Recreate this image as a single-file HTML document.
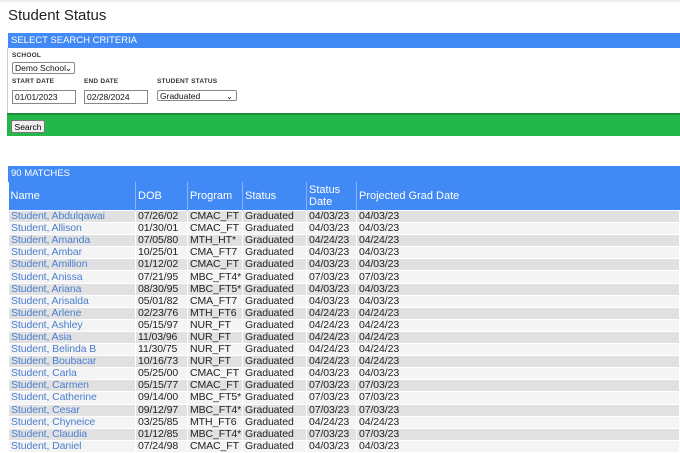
<!DOCTYPE html>
<html><head><style>
body{margin:0;width:680px;height:443px;overflow:hidden;background:#fff;font-family:"Liberation Sans",Arial,sans-serif;position:relative}
.top{position:absolute;left:0;top:0;width:680px;height:2px;background:#eee}
h1{position:absolute;left:8px;top:7px;margin:0;font-size:15px;font-weight:normal;color:#222}
.bar{position:absolute;left:8px;width:672px;background:#4189f5;color:#fff;font-size:9.5px;height:15px;line-height:15px;padding-left:3px;box-sizing:border-box}
.panel{position:absolute;left:7px;top:48px;width:673px;height:65px;border-left:1px solid #ccc;box-sizing:border-box}
.lbl{position:absolute;font-size:6.5px;font-weight:bold;color:#333;letter-spacing:.2px;white-space:nowrap}
.inp{position:absolute;border:1px solid #888;font-size:8.5px;height:14px;line-height:13px;padding-left:2px;box-sizing:border-box;background:#fff;color:#111;white-space:nowrap}
.sel{border-radius:2px}
.green{position:absolute;left:7px;top:113px;width:673px;height:23px;background:#24b74a;border-top:2px solid #1e8f3a;box-sizing:border-box}
.btn{position:absolute;left:4px;top:5px;width:34px;height:13px;border:1px solid #777;background:#f0f0f0;font-size:8.5px;line-height:12px;text-align:center;border-radius:2px;box-sizing:border-box}
table{position:absolute;left:8px;top:182px;width:672px;border-collapse:collapse;font-size:10.5px;table-layout:fixed}
th{background:#4189f5;color:#fff;font-weight:normal;text-align:left;height:28px;padding:0 2px;border-left:1px solid #8ab4f8;line-height:12px;font-size:11px}
td{height:11.1px;padding:0 1px 0 2px;line-height:11px;border:1px solid #fff;color:#222;white-space:nowrap;overflow:hidden;letter-spacing:-0.1px}
td:first-child{color:#4a7fcf}
tr.o td{background:#e1e1e1}
tr.e td{background:#f4f4f4}
</style></head><body>
<div class="top"></div>
<h1>Student Status</h1>
<div class="bar" style="top:33px">SELECT SEARCH CRITERIA</div>
<div class="panel">
<div class="lbl" style="left:4px;top:4px">SCHOOL</div>
<div class="inp sel" style="left:4px;top:14px;width:63px;height:12px;line-height:11px">Demo School<span style="position:absolute;right:2px">⌄</span></div>
<div class="lbl" style="left:4px;top:30px">START DATE</div>
<div class="lbl" style="left:76px;top:30px">END DATE</div>
<div class="lbl" style="left:149px;top:30px">STUDENT STATUS</div>
<div class="inp" style="left:4px;top:42px;width:64px">01/01/2023</div>
<div class="inp" style="left:76px;top:42px;width:64px">02/28/2024</div>
<div class="inp sel" style="left:149px;top:42px;width:80px;height:11px;line-height:10px">Graduated<span style="position:absolute;right:3px">⌄</span></div>
</div>
<div class="green"><div class="btn">Search</div></div>
<div class="bar" style="top:166px;height:16px;line-height:16px">90 MATCHES</div>
<table>
<colgroup><col style="width:127px"><col style="width:52px"><col style="width:55px"><col style="width:64px"><col style="width:50px"><col></colgroup>
<tr><th style="border-left:none">Name</th><th>DOB</th><th>Program</th><th>Status</th><th>Status<br>Date</th><th>Projected Grad Date</th></tr>
<tr class="o"><td>Student, Abdulqawai</td><td>07/26/02</td><td>CMAC_FT</td><td>Graduated</td><td>04/03/23</td><td>04/03/23</td></tr>
<tr class="e"><td>Student, Allison</td><td>01/30/01</td><td>CMAC_FT</td><td>Graduated</td><td>04/03/23</td><td>04/03/23</td></tr>
<tr class="o"><td>Student, Amanda</td><td>07/05/80</td><td>MTH_HT*</td><td>Graduated</td><td>04/24/23</td><td>04/24/23</td></tr>
<tr class="e"><td>Student, Ambar</td><td>10/25/01</td><td>CMA_FT7</td><td>Graduated</td><td>04/03/23</td><td>04/03/23</td></tr>
<tr class="o"><td>Student, Amillion</td><td>01/12/02</td><td>CMAC_FT</td><td>Graduated</td><td>04/03/23</td><td>04/03/23</td></tr>
<tr class="e"><td>Student, Anissa</td><td>07/21/95</td><td>MBC_FT4*</td><td>Graduated</td><td>07/03/23</td><td>07/03/23</td></tr>
<tr class="o"><td>Student, Ariana</td><td>08/30/95</td><td>MBC_FT5*</td><td>Graduated</td><td>04/03/23</td><td>04/03/23</td></tr>
<tr class="e"><td>Student, Arisalda</td><td>05/01/82</td><td>CMA_FT7</td><td>Graduated</td><td>04/03/23</td><td>04/03/23</td></tr>
<tr class="o"><td>Student, Arlene</td><td>02/23/76</td><td>MTH_FT6</td><td>Graduated</td><td>04/24/23</td><td>04/24/23</td></tr>
<tr class="e"><td>Student, Ashley</td><td>05/15/97</td><td>NUR_FT</td><td>Graduated</td><td>04/24/23</td><td>04/24/23</td></tr>
<tr class="o"><td>Student, Asia</td><td>11/03/96</td><td>NUR_FT</td><td>Graduated</td><td>04/24/23</td><td>04/24/23</td></tr>
<tr class="e"><td>Student, Belinda B</td><td>11/30/75</td><td>NUR_FT</td><td>Graduated</td><td>04/24/23</td><td>04/24/23</td></tr>
<tr class="o"><td>Student, Boubacar</td><td>10/16/73</td><td>NUR_FT</td><td>Graduated</td><td>04/24/23</td><td>04/24/23</td></tr>
<tr class="e"><td>Student, Carla</td><td>05/25/00</td><td>CMAC_FT</td><td>Graduated</td><td>04/03/23</td><td>04/03/23</td></tr>
<tr class="o"><td>Student, Carmen</td><td>05/15/77</td><td>CMAC_FT</td><td>Graduated</td><td>07/03/23</td><td>07/03/23</td></tr>
<tr class="e"><td>Student, Catherine</td><td>09/14/00</td><td>MBC_FT5*</td><td>Graduated</td><td>07/03/23</td><td>07/03/23</td></tr>
<tr class="o"><td>Student, Cesar</td><td>09/12/97</td><td>MBC_FT4*</td><td>Graduated</td><td>07/03/23</td><td>07/03/23</td></tr>
<tr class="e"><td>Student, Chyneice</td><td>03/25/85</td><td>MTH_FT6</td><td>Graduated</td><td>04/24/23</td><td>04/24/23</td></tr>
<tr class="o"><td>Student, Claudia</td><td>01/12/85</td><td>MBC_FT4*</td><td>Graduated</td><td>07/03/23</td><td>07/03/23</td></tr>
<tr class="e"><td>Student, Daniel</td><td>07/24/98</td><td>CMAC_FT</td><td>Graduated</td><td>04/03/23</td><td>04/03/23</td></tr>
</table>
</body></html>
